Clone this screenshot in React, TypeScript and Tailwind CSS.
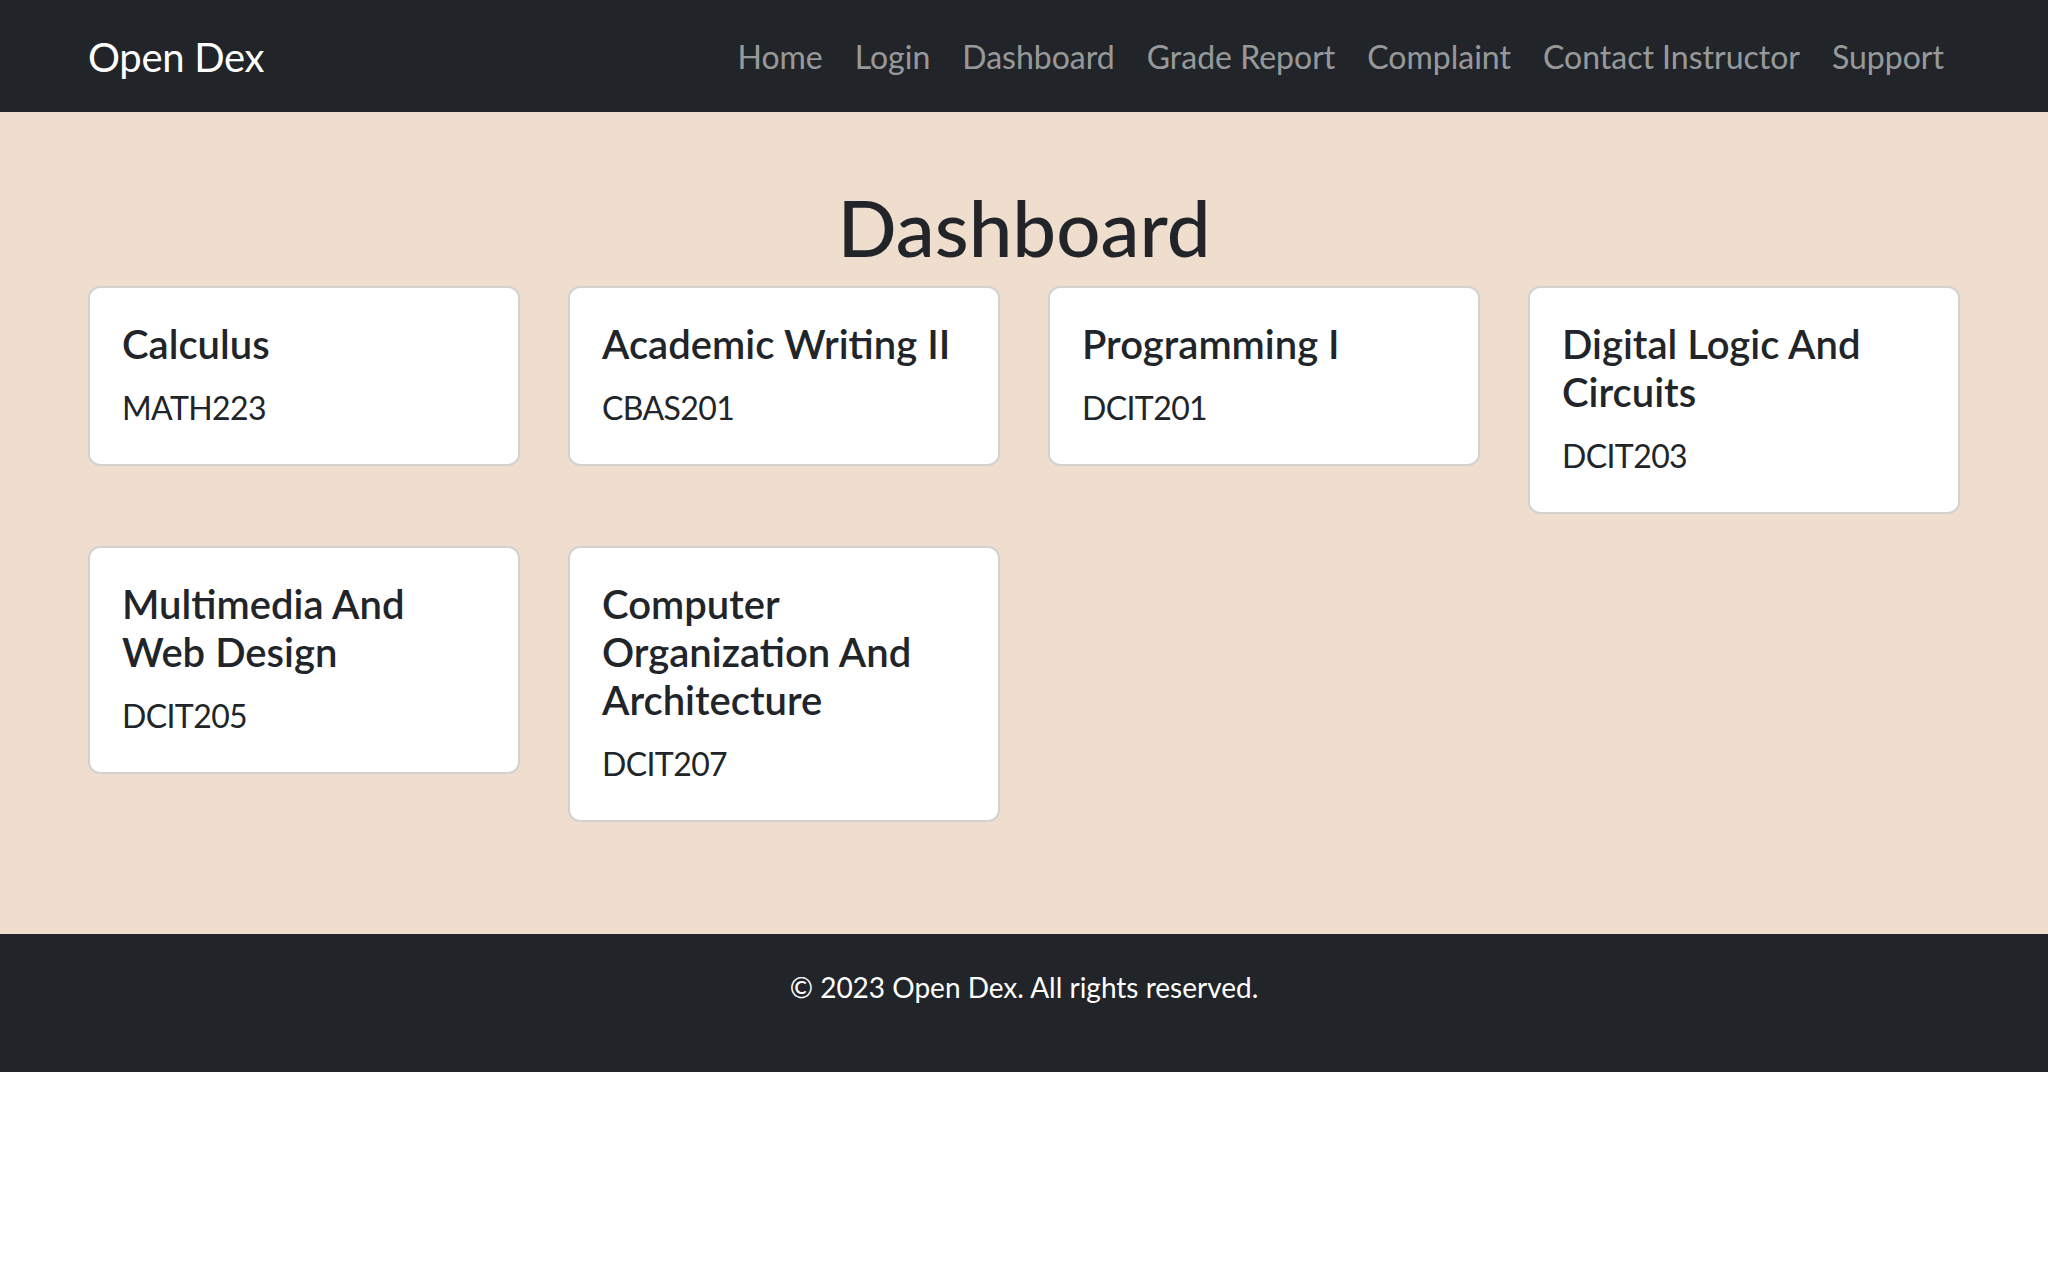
import React from 'react';

const NAV_LINKS = ['Home', 'Login', 'Dashboard', 'Grade Report', 'Complaint', 'Contact Instructor', 'Support'];

const COURSES = [
  { title: 'Calculus', code: 'MATH223' },
  { title: 'Academic Writing II', code: 'CBAS201' },
  { title: 'Programming I', code: 'DCIT201' },
  { title: 'Digital Logic And Circuits', code: 'DCIT203' },
  { title: 'Multimedia And Web Design', code: 'DCIT205' },
  { title: 'Computer Organization And Architecture', code: 'DCIT207' },
];

const App: React.FC = () => {
  return (
    <div className="min-h-screen bg-white text-[#212529] font-['Lato',sans-serif]">
      {/* Navbar */}
      <nav className="bg-[#212529] py-4">
        <div className="mx-auto max-w-[1920px] px-6 flex items-center justify-between">
          <a href="#" className="text-white text-[40px] leading-[60px] pt-[11px] pb-[9px] tracking-[-0.3px]">Open Dex</a>
          <ul className="flex items-center">
            {NAV_LINKS.map(link => (
              <li key={link}>
                <a href="#" className="block px-4 pt-[17px] pb-[15px] text-[32px] leading-[48px] text-[rgba(255,255,255,0.55)]">
                  {link}
                </a>
              </li>
            ))}
          </ul>
        </div>
      </nav>

      {/* Main */}
      <main className="bg-[#efdecd]">
        <div className="mx-auto max-w-[1920px] px-6 pt-[67px] pb-[112px]">
          <h1 className="text-center text-[78px] leading-[96px] font-medium mb-[11px]">Dashboard</h1>
          <div className="grid grid-cols-4 gap-x-12 gap-y-8 items-start">
            {COURSES.map(course => (
              <div key={course.code} className="bg-white border-2 border-[rgba(0,0,0,0.175)] rounded-xl p-8">
                <h5 className="text-[40px] leading-[48px] font-semibold mb-4">{course.title}</h5>
                <p className="text-[32px] leading-[48px] tracking-[-0.6px]">{course.code}</p>
              </div>
            ))}
          </div>
        </div>
      </main>

      {/* Footer */}
      <footer className="bg-[#212529] pt-8 pb-8 text-center text-white">
        <p className="text-[28px] leading-[42px] mb-8">© 2023 Open Dex. All rights reserved.</p>
      </footer>
    </div>
  );
};

export default App;
